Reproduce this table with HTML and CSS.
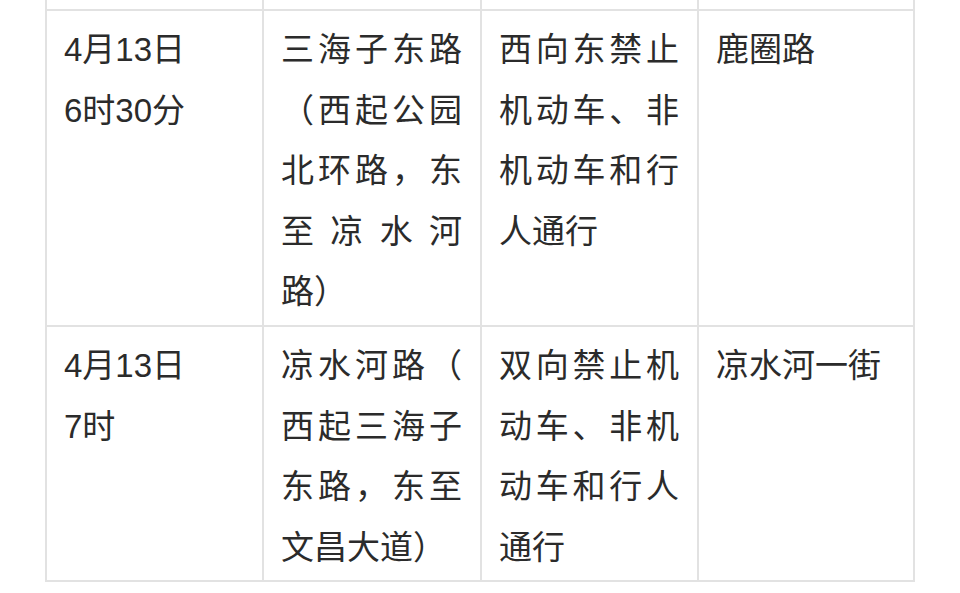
FILE: index.html
```html
<!DOCTYPE html>
<html lang="zh-CN">
<head>
<meta charset="utf-8">
<title>交通管制</title>
<link rel="stylesheet" href="styles.css">
</head>
<body>
<div class="table">
  <div class="cell stub"></div>
  <div class="cell stub"></div>
  <div class="cell stub"></div>
  <div class="cell stub"></div>

  <div class="cell">4月13日<br>6时30分</div>
  <div class="cell just">
    <span class="ln">三海子东路</span>
    <span class="ln">（西起公园</span>
    <span class="ln">北环路，东</span>
    <span class="ln">至凉水河</span>
    <span class="last">路）</span>
  </div>
  <div class="cell just">
    <span class="ln">西向东禁止</span>
    <span class="ln">机动车、非</span>
    <span class="ln">机动车和行</span>
    <span class="last">人通行</span>
  </div>
  <div class="cell">鹿圈路</div>

  <div class="cell">4月13日<br>7时</div>
  <div class="cell just">
    <span class="ln">凉水河路（</span>
    <span class="ln">西起三海子</span>
    <span class="ln">东路，东至</span>
    <span class="last">文昌大道）</span>
  </div>
  <div class="cell just">
    <span class="ln">双向禁止机</span>
    <span class="ln">动车、非机</span>
    <span class="ln">动车和行人</span>
    <span class="last">通行</span>
  </div>
  <div class="cell">凉水河一街</div>
</div>
</body>
</html>
```

FILE: styles.css
```css
html, body {
  margin: 0;
  padding: 0;
  background: #ffffff;
}

body {
  font-family: "Liberation Sans", "Noto Sans CJK SC", sans-serif;
  color: #2b2b2b;
}

.table {
  width: 870px;
  margin: 0 auto;
  display: grid;
  grid-template-columns: 215px 216px 215px 214px;
  grid-template-rows: 9px 314px 253px;
  gap: 2px;
  padding: 0 2px 2px 2px;
  background: #e2e2e2;
  box-sizing: border-box;
}

.cell {
  background: #ffffff;
  font-size: 33px;
  line-height: 60.5px;
  padding: 9px 18px 0 17px;
  box-sizing: border-box;
  overflow: hidden;
}

.cell.stub {
  padding: 0;
}

.just .ln {
  display: block;
  text-align: justify;
  text-align-last: justify;
}

.just .last {
  display: block;
  text-align: left;
}
```
